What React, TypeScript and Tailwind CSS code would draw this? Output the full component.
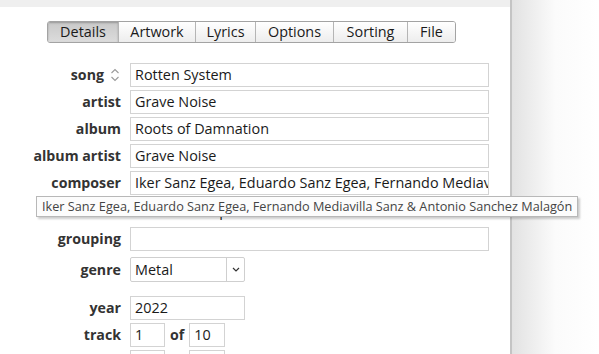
import React from "react";

const tabs = [
  { name: "Details", w: 71 },
  { name: "Artwork", w: 77 },
  { name: "Lyrics", w: 60 },
  { name: "Options", w: 78 },
  { name: "Sorting", w: 74 },
  { name: "File", w: 48 },
];

function Label({ children }: { children: React.ReactNode }) {
  return (
    <div className="w-[121px] shrink-0 flex justify-end items-center font-bold text-[14.2px] text-[#333]">
      {children}
    </div>
  );
}

function Field({ value, w = 359 }: { value: string; w?: number }) {
  return (
    <div
      className="h-[24px] shrink-0 border border-[#d3d3d3] bg-white flex items-center pl-[4px] overflow-hidden whitespace-nowrap text-[14.4px] text-[#1a1a1a]"
      style={{ width: w }}
    >
      {value}
    </div>
  );
}

function Row({ label, children, className = "" }: { label: React.ReactNode; children: React.ReactNode; className?: string }) {
  return (
    <div className={"flex items-center gap-[9px] shrink-0 " + className}>
      <Label>{label}</Label>
      {children}
    </div>
  );
}

export default function App() {
  return (
    <div
      className="w-[599px] h-[354px] overflow-hidden flex bg-white relative"
      style={{ fontFamily: '"Open Sans", "Noto Sans", sans-serif' }}
    >
      <div className="w-[510px] shrink-0 flex flex-col">
        <div className="h-[7px] shrink-0 bg-[#efefef]" />
        <div className="pl-[47px] pt-[14px] shrink-0">
          <div className="flex h-[22px] border border-[#a3a3a3] rounded-[3px] overflow-hidden w-max">
            {tabs.map((t, i) => (
              <div
                key={t.name}
                className={
                  "flex items-center justify-center text-[14.4px] text-[#1a1a1a] " +
                  (i > 0 ? "border-l border-[#b5b5b5] " : "") +
                  (i === 0
                    ? "bg-gradient-to-b from-[#c9c9c9] to-[#dcdcdc] shadow-[inset_0_1px_2px_rgba(0,0,0,0.25)]"
                    : "bg-gradient-to-b from-[#ffffff] to-[#ededed]")
                }
                style={{ width: i === 0 ? t.w - 1 : t.w }}
              >
                {t.name}
              </div>
            ))}
          </div>
        </div>
        <div className="flex flex-col gap-[3px] pt-[20px]">
          <Row label={
            <span className="flex items-center">
              song
              <svg width="10" height="14" viewBox="0 0 10 14" className="ml-[6px] mr-[1px]">
                <path d="M1.5 5 L5 1.5 L8.5 5" fill="none" stroke="#9a9a9a" strokeWidth="1.1" />
                <path d="M1.5 9 L5 12.5 L8.5 9" fill="none" stroke="#9a9a9a" strokeWidth="1.1" />
              </svg>
            </span>
          }>
            <Field value="Rotten System" />
          </Row>
          <Row label="artist"><Field value="Grave Noise" /></Row>
          <Row label="album"><Field value="Roots of Damnation" /></Row>
          <Row label="album artist"><Field value="Grave Noise" /></Row>
          <Row label="composer">
            <Field value="Iker Sanz Egea, Eduardo Sanz Egea, Fernando Mediavilla Sanz & Antonio Sanchez Malagón" />
          </Row>
          <Row label="" className="h-[26px]">
            <div className="flex items-center gap-[7px] text-[14.4px] text-[#1a1a1a]">
              <div className="w-[13px] h-[13px] border border-[#333] bg-white" />
              <span>Show composer in all views</span>
            </div>
          </Row>
          <Row label="grouping"><Field value="" /></Row>
          <Row label="genre" className="mt-[3px]">
            <div className="w-[115px] h-[25px] border border-[#cfcfcf] rounded-[2px] bg-white flex text-[14.4px] text-[#1a1a1a]">
              <div className="flex-1 flex items-center pl-[4px] border-r border-[#cfcfcf]">Metal</div>
              <div className="w-[17px] flex items-center justify-center">
                <svg width="8" height="5" viewBox="0 0 8 5">
                  <path d="M1 1 L4 4 L7 1" fill="none" stroke="#333" strokeWidth="1.2" />
                </svg>
              </div>
            </div>
          </Row>
          <Row label="year" className="mt-[11px]"><Field value="2022" w={115} /></Row>
          <Row label="track">
            <div className="flex items-center gap-[5px]">
              <Field value="1" w={35} />
              <span className="font-bold text-[14.2px] text-[#333]">of</span>
              <Field value="10" w={36} />
            </div>
          </Row>
          <Row label="disc">
            <div className="flex items-center gap-[5px]">
              <Field value="" w={35} />
              <span className="font-bold text-[14.2px] text-[#333]">of</span>
              <Field value="" w={36} />
            </div>
          </Row>
        </div>
      </div>
      <div className="flex-1 flex">
        <div className="w-[2px] bg-[#c4c4c4]" />
        <div className="flex-1 bg-gradient-to-r from-[#e2e2e2] via-[#fbfbfb] via-50% to-white" />
      </div>
      <div className="absolute left-[36px] top-[196px] h-[21px] px-[5px] flex items-center border border-[#b8b8b8] bg-[#fcfcfc] text-[12.7px] text-[#444] whitespace-nowrap shadow-[2px_2px_2px_rgba(0,0,0,0.2)]">
        Iker Sanz Egea, Eduardo Sanz Egea, Fernando Mediavilla Sanz &amp; Antonio Sanchez Malagón
      </div>
    </div>
  );
}
